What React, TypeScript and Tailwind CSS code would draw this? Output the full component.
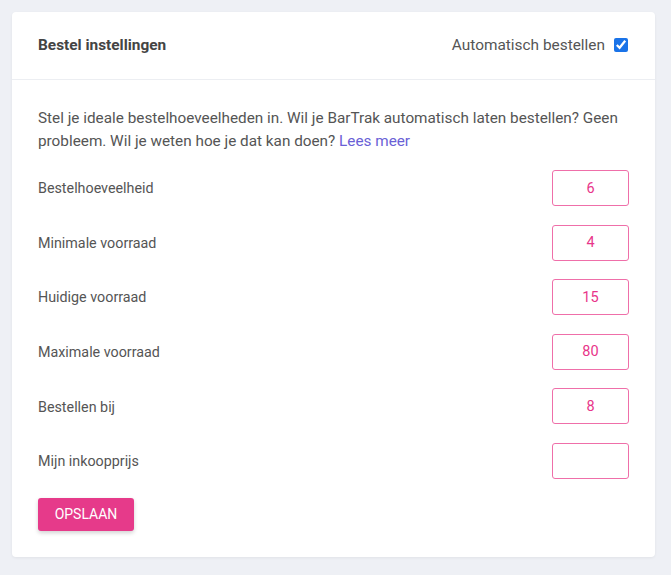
import React, { useState } from 'react';

const rows = [
  { label: 'Bestelhoeveelheid', value: '6' },
  { label: 'Minimale voorraad', value: '4' },
  { label: 'Huidige voorraad', value: '15' },
  { label: 'Maximale voorraad', value: '80' },
  { label: 'Bestellen bij', value: '8' },
  { label: 'Mijn inkoopprijs', value: '' },
];

const App: React.FC = () => {
  const [auto, setAuto] = useState(true);

  return (
    <div className="min-h-[575px] bg-[#eef0f5] pt-3 pl-3 pr-4 pb-5 font-['Roboto',sans-serif]">
      <div className="bg-white rounded-sm shadow-[0_1px_3px_rgba(0,0,0,0.06)]">
        <div className="h-[68px] flex items-center justify-between pl-[26px] pr-[27px] border-b border-[#eceef2]">
          <h2 className="text-[15.4px] font-bold text-[#444]">Bestel instellingen</h2>
          <label className="flex items-center gap-[9px] text-[15.4px] text-[#555]">
            Automatisch bestellen
            <input
              type="checkbox"
              checked={auto}
              onChange={() => setAuto(!auto)}
              className="w-[14px] h-[14px] accent-[#1a73e8]"
            />
          </label>
        </div>
        <div className="pt-[27px] pl-[26px] pr-[26px] pb-[26px]">
          <p className="text-[15.3px] leading-[23px] text-[#555]">
            Stel je ideale bestelhoeveelheden in. Wil je BarTrak automatisch laten bestellen? Geen probleem. Wil je weten
            hoe je dat kan doen? <a className="text-[#6a5fd6]">Lees meer</a>
          </p>
          <div className="mt-[17px] flex flex-col gap-[18.6px]">
            {rows.map((r) => (
              <div key={r.label} className="flex items-center justify-between">
                <span className="text-[14.3px] text-[#555] pt-[2px]">{r.label}</span>
                <input
                  defaultValue={r.value}
                  className="w-[77px] h-[36px] border border-[#ef6fa9] rounded-[3px] text-center text-[14.5px] text-[#e8358a] outline-none"
                />
              </div>
            ))}
          </div>
          <button className="mt-[19px] w-[96px] h-[33px] bg-[#e63a8a] text-white text-[14px] rounded-[3px] shadow-[0_2px_4px_rgba(0,0,0,0.18)]">
            OPSLAAN
          </button>
        </div>
      </div>
    </div>
  );
};

export default App;
